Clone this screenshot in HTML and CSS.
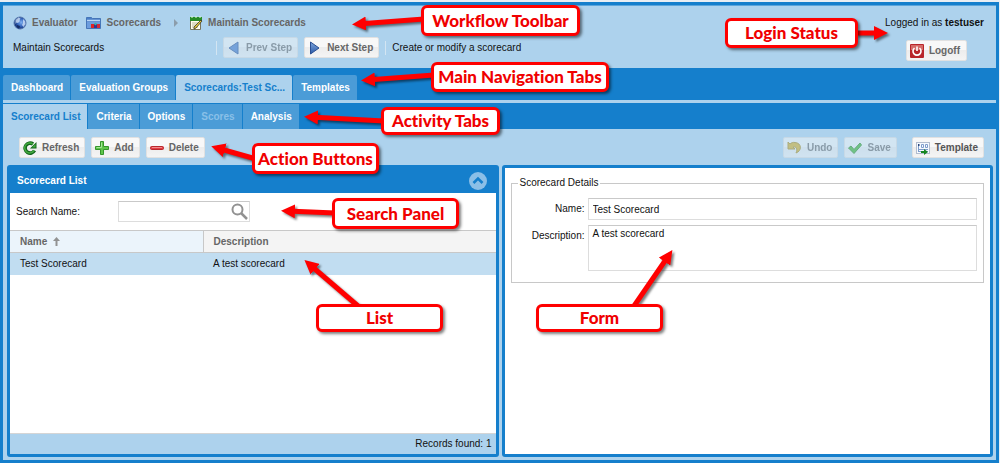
FILE: index.html
```html
<!DOCTYPE html>
<html lang="en">
<head>
<meta charset="utf-8">
<title>Maintain Scorecards</title>
<link rel="stylesheet" href="styles.css">
</head>
<body>
<div class="app">
  <header class="workflow">
    <div class="workflow-main">
      <nav class="crumbs" aria-label="Breadcrumb">
        <a class="crumb" href="#">
          <svg width="14" height="14" viewBox="0 0 14 14"><defs><radialGradient id="globe" cx=".6" cy=".45"><stop offset="0" stop-color="#7fb0f0"/><stop offset=".65" stop-color="#3464ba"/><stop offset="1" stop-color="#1a3b82"/></radialGradient></defs><circle cx="7" cy="7" r="6" fill="url(#globe)" stroke="#5577ad"/><path d="M2.500 4l3-2.500 2 1-1 1.500.5 1-2 2-1.500-.5-1 1.500zM10 3l2 2 .5 3-2 3-1.500-2 1-2z" fill="#dbe9fb" opacity=".75"/><path d="M4 9l3 1-1 3-2-2z" fill="#142d66"/></svg>
          Evaluator</a>
        <a class="crumb" href="#">
          <svg width="16" height="14" viewBox="0 0 16 14"><path d="M.5 1.500h5l1 1h8v10H.5z" fill="#4a7fc8" stroke="#4676b8"/><path d="M1 4.500h13" stroke="#b9d6f5" stroke-width="1.500"/><path d="M1 6h13v6H1z" fill="#6c9dde"/><path d="M5 8h3v4H5z" fill="#e02525"/><path d="M8 8h3v4H8z" fill="#35348f"/><path d="M11 8h3v4h-3z" fill="#d22b39"/><circle cx="9.500" cy="8" r="1.200" fill="#3fb3a4"/></svg>
          Scorecards</a>
        <svg class="crumb-arrow" width="6" height="8" viewBox="0 0 6 8"><path d="M1 0l4 4-4 4z" fill="#8c9dab"/></svg>
        <a class="crumb" href="#">
          <svg width="14" height="14" viewBox="0 0 14 14"><path d="M1.500 2h10v11.500h-10z" fill="#fffdee" stroke="#77755d"/><path d="M1 1h12v4H1z" fill="#268b28"/><path d="M2 1h2M6 1h2M10 1h2" stroke="#e5ffe0"/><path d="M3 7h6M3 9h5M3 11h6" stroke="#b9b99a"/><path d="M5 11L12 4l1 1-6 7-2 1z" fill="#e7c83c" stroke="#343424" stroke-width=".8"/></svg>
          Maintain Scorecards</a>
      </nav>
      <div class="steps">
        <span class="step-title">Maintain Scorecards</span>
        <span class="separator"></span>
        <button class="btn btn-step" type="button" disabled><svg width="14" height="14" viewBox="0 0 14 14"><path d="M11 1v12L2 7z" fill="#3f74c8" stroke="#234b91"/></svg>Prev Step</button>
        <button class="btn btn-step" type="button"><svg width="14" height="14" viewBox="0 0 14 14"><defs><linearGradient id="next" x2="0" y2="1"><stop stop-color="#7ea5dc"/><stop offset="1" stop-color="#2a5aa8"/></linearGradient></defs><path d="M2.500 1v12l8.500-6z" fill="url(#next)" stroke="#2a4f92"/></svg>Next Step</button>
        <span class="separator"></span>
        <span>Create or modify a scorecard</span>
      </div>
    </div>
    <div class="login">
      <span>Logged in as <b>testuser</b></span>
      <button class="btn btn-logoff" type="button"><svg width="14" height="14" viewBox="0 0 14 14"><rect width="14" height="14" rx="1" fill="#b8252a"/><path d="M1 1h12v5H1z" fill="#d46b67"/><path d="M4.500 4a4 4 0 1 0 5 0M7 2.500v4.500" fill="none" stroke="#fff" stroke-width="1.600"/></svg>Logoff</button>
    </div>
  </header>

  <nav class="tabs main-tabs" aria-label="Main">
    <button class="tab" type="button">Dashboard</button>
    <button class="tab" type="button">Evaluation Groups</button>
    <button class="tab active" type="button">Scorecards:Test Sc...</button>
    <button class="tab" type="button">Templates</button>
  </nav>
  <nav class="tabs activity-tabs" aria-label="Activity">
    <button class="tab active" type="button">Scorecard List</button>
    <button class="tab" type="button">Criteria</button>
    <button class="tab" type="button">Options</button>
    <button class="tab" type="button" disabled>Scores</button>
    <button class="tab" type="button">Analysis</button>
  </nav>

  <main class="workspace">
    <div class="actions">
      <button class="btn" type="button"><svg width="14" height="14" viewBox="0 0 14 14"><path d="M11.500 9.500A5 5 0 1 1 10 3" fill="none" stroke="#14651c" stroke-width="3.600"/><path d="M13.500 1v6.500H7z" fill="#14651c"/><path d="M11 9.500A5 5 0 1 1 10 3.200" fill="none" stroke="#43ab3e" stroke-width="1.500"/><path d="M12.500 3v3.500H9z" fill="#43ab3e"/></svg>Refresh</button>
      <button class="btn" type="button"><svg width="14" height="14" viewBox="0 0 14 14"><path d="M5.500.5h3v5h5v3h-5v5h-3v-5h-5v-3h5z" fill="#5fc64b" stroke="#35952c"/><path d="M6.500 1.500v5h-5" fill="none" stroke="#a5e796"/></svg>Add</button>
      <button class="btn" type="button"><svg width="14" height="14" viewBox="0 0 14 14"><rect x=".5" y="5.500" width="13" height="3" rx="1" fill="#e33b42" stroke="#b6282c"/><path d="M2 6.500h10" stroke="#f2898a"/></svg>Delete</button>
      <span class="spacer"></span>
      <button class="btn" type="button" disabled><svg width="15" height="14" viewBox="0 0 15 14"><path d="M1 1v7h7L6 6c3-1 5 2 3 6 6-2 6-10-1-10.500C6 1 4 2 3 3z" fill="#d8ad1c" stroke="#a78716"/></svg>Undo</button>
      <button class="btn" type="button" disabled><svg width="14" height="14" viewBox="0 0 14 14"><path d="M.5 7l2.500-2 3 3.500L12 2l1.500 2L6 12.500z" fill="#35b51f" stroke="#238817"/></svg>Save</button>
      <button class="btn btn-template" type="button"><svg width="14" height="14" viewBox="0 0 14 14"><rect x=".5" y="1.500" width="13" height="11" fill="#f6faff" stroke="#b3bdce"/><path d="M2.500 3v8M5.500 3.500h2v3h-2zM9.500 3.500h2v3h-2zM3 8.500h9M2 10.500h10" fill="none" stroke="#7f9dcb"/><path d="M2 3h1.500v2H2z" fill="#27457c"/><path d="M5 10h3V8l4 3-4 3v-2H5z" fill="#168620"/></svg>Template</button>
    </div>

    <div class="panels">
      <section class="panel">
        <div class="panel-head">
          <h2>Scorecard List</h2>
          <button class="collapse" type="button" aria-label="Collapse"><svg width="18" height="18" viewBox="0 0 18 18"><circle cx="9" cy="9" r="9" fill="#8bbfe7"/><path d="M4.500 11L9 6.500l4.500 4.500" fill="none" stroke="#157fcc" stroke-width="2.600"/></svg></button>
        </div>
        <div class="panel-body">
          <div class="search">
            <label for="search">Search Name:</label>
            <span class="search-box">
              <input id="search" type="text">
              <svg width="17" height="17" viewBox="0 0 17 17"><circle cx="6.500" cy="6.500" r="5" fill="none" stroke="#929292" stroke-width="2"/><path d="M10 10l6 6" stroke="#929292" stroke-width="2.500"/></svg>
            </span>
          </div>
          <table class="grid">
            <thead><tr><th class="sorted">Name <svg width="7" height="9" viewBox="0 0 7 9"><path d="M3.500 0L7 4H4.500v5h-2V4H0z" fill="#929292"/></svg></th><th>Description</th></tr></thead>
            <tbody><tr><td>Test Scorecard</td><td>A test scorecard</td></tr></tbody>
          </table>
          <div class="status">Records found: 1</div>
        </div>
      </section>

      <section class="panel">
        <form class="panel-body details">
          <fieldset>
            <legend>Scorecard Details</legend>
            <label for="name">Name:</label>
            <input id="name" type="text" value="Test Scorecard">
            <label for="description">Description:</label>
            <textarea id="description">A test scorecard</textarea>
          </fieldset>
        </form>
      </section>
    </div>
  </main>
</div>

<div class="notes">
  <svg class="arrows" width="1000" height="463" viewBox="0 0 1000 463">
    <defs><marker id="head" markerUnits="userSpaceOnUse" markerWidth="14" markerHeight="14" refX="8" refY="7" orient="auto"><path d="M0 0l14 7-14 7z" fill="#f00"/></marker></defs>
    <g fill="none" stroke="#f00" stroke-width="5">
      <path d="M424 19L358 24" marker-end="url(#head)"/>
      <path d="M434 75L367 80" marker-end="url(#head)"/>
      <path d="M384 121L310 117" marker-end="url(#head)"/>
      <path d="M256 159L217 148" marker-end="url(#head)"/>
      <path d="M335 213L287 211" marker-end="url(#head)"/>
      <path d="M358 306L309 264" marker-end="url(#head)"/>
      <path d="M634 306L669 255" marker-end="url(#head)"/>
      <path d="M856 33H882" marker-end="url(#head)"/>
    </g>
  </svg>
  <span class="note note-workflow">Workflow Toolbar</span>
  <span class="note note-login">Login Status</span>
  <span class="note note-main">Main Navigation Tabs</span>
  <span class="note note-activity">Activity Tabs</span>
  <span class="note note-actions">Action Buttons</span>
  <span class="note note-search">Search Panel</span>
  <span class="note note-list">List</span>
  <span class="note note-form">Form</span>
</div>
</body>
</html>
```
FILE: styles.css
```css
* { box-sizing: border-box; }

body {
  margin: 0;
  background: #e9eef3;
  color: #111;
  font: 10px/14px "Liberation Sans", Arial, sans-serif;
}

button, input, textarea { font: inherit; color: inherit; margin: 0; }
svg { display: block; flex: none; }

.app {
  display: flex;
  flex-direction: column;
  min-height: calc(100vh - 2px);
  margin: 2px 1px 0 0;
  padding: 3px;
  background: #157fcc;
}

/* Workflow toolbar */
.workflow {
  display: flex;
  justify-content: space-between;
  padding: 10px 12px 7px 10px;
  border-top: 1px solid #5aa5dc;
  background: #add2ed;
}
.workflow-main { display: flex; flex-direction: column; gap: 7px; }
.crumbs { display: flex; align-items: center; height: 14px; }
.crumb {
  display: flex;
  align-items: center;
  gap: 5px;
  margin-right: 8px;
  color: #666;
  font-weight: bold;
  text-decoration: none;
}
.crumb-arrow { margin: 0 10px 0 4px; }
.steps { display: flex; align-items: center; gap: 6px; }
.step-title { width: 197px; }
.separator { width: 1px; height: 14px; background: #d3e5f2; }
.login { display: flex; flex-direction: column; align-items: flex-end; gap: 10px; }

.btn {
  display: flex;
  align-items: center;
  gap: 5px;
  height: 21px;
  padding: 0 5px 0 3px;
  border: 1px solid #e1e1e1;
  border-radius: 2px;
  background: linear-gradient(#f8f8f8 50%, #ededed 50%, #f4f4f4);
  color: #666;
  font-weight: bold;
  white-space: nowrap;
}
.btn:disabled { opacity: .5; }
.btn-logoff { margin-right: 17px; padding-right: 6px; }

/* Tab bars */
.tabs { display: flex; gap: 1px; }
.tab {
  height: 25px;
  padding: 0 7px 0 8px;
  border: 0;
  border-radius: 2px 2px 0 0;
  background: #4b9cd7;
  color: #fff;
  font-weight: bold;
}
.tab.active { background: #add2ed; color: #157fcc; }
.tab:disabled { color: #89c0e8; }
.main-tabs { padding-top: 7px; border-bottom: 3px solid #add2ed; }
.activity-tabs { padding-top: 1px; }
.activity-tabs .tab { border-radius: 0; }

/* Workspace */
.workspace {
  display: flex;
  flex: 1;
  flex-direction: column;
  padding: 8px 3px 3px 4px;
  background: #add2ed;
}
.actions { display: flex; gap: 6px; padding: 0 9px 7px 12px; }
.spacer { flex: 1; }
.btn-template { margin-left: 9px; color: #555; }
.panels { display: flex; flex: 1; gap: 3px; }
.panel {
  display: flex;
  flex: 1;
  flex-direction: column;
  padding: 3px;
  border-radius: 3px;
  background: #157fcc;
}
.panel-head { display: flex; align-items: center; justify-content: space-between; height: 25px; padding: 0 9px 0 7px; }
.panel-head h2 { margin: 0; color: #fff; font-size: 10px; }
.collapse { padding: 0; border: 0; background: none; }
.panel-body { display: flex; flex: 1; flex-direction: column; background: #fff; }

.search { display: flex; align-items: center; height: 37px; padding: 0 6px; }
.search label { width: 102px; }
.search-box { position: relative; }
.search-box input { display: block; width: 132px; height: 21px; padding: 0 22px 0 4px; }
.search-box svg { position: absolute; top: 2px; right: 2px; }

input, textarea {
  border: 1px solid #ddd;
  border-top-color: #c9c9c9;
  border-radius: 0;
  background: #fff;
  outline: 0;
}

.grid { width: 100%; border-collapse: collapse; table-layout: fixed; }
.grid th, .grid td { height: 22px; padding: 0 10px; text-align: left; }
.grid th { border: solid #c8c8c8; border-width: 1px 0; background: #f4f4f4; color: #666; }
.grid th.sorted { width: 193px; border-right-width: 1px; background: #ebf4fb; }
.grid th svg { display: inline-block; margin-left: 3px; vertical-align: -1px; }
.grid td { background: #c1ddf1; }
.status { margin-top: auto; padding: 3px 4px; border-top: 1px solid #d5d5d5; background: #add2ed; text-align: right; }

.details { padding: 8px 6px; }
.details fieldset {
  display: grid;
  grid-template-columns: 73px 1fr;
  gap: 5px 3px;
  margin: 0;
  padding: 8px 6px 11px 0;
  border: 1px solid #c8c8c8;
}
.details legend { margin-left: 6px; padding: 0 2px; }
.details label { padding-top: 4px; text-align: right; }
.details input { min-width: 0; height: 22px; padding: 0 4px; }
.details textarea { height: 46px; padding: 1px 4px; resize: none; }

/* Callouts laid over the interface */
.notes { position: absolute; top: 0; left: 0; pointer-events: none; }
.arrows { filter: drop-shadow(2px 2px 1px rgba(0, 0, 0, .5)); }
.note {
  position: absolute;
  display: flex;
  align-items: center;
  justify-content: center;
  width: 127px;
  height: 28px;
  border: 3px solid #f00;
  border-radius: 6px;
  background: #fff;
  box-shadow: 2px 2px 3px rgba(0, 0, 0, .5);
  color: #f00000;
  font: 900 17px/22px Lato, sans-serif;
  font-variant-ligatures: none;
  white-space: nowrap;
}
.note-workflow { left: 421px; top: 5px; width: 159px; height: 31px; }
.note-login { left: 725px; top: 18px; width: 133px; height: 30px; }
.note-main { left: 431px; top: 62px; width: 178px; height: 30px; }
.note-activity { left: 381px; top: 107px; width: 119px; }
.note-actions { left: 252px; top: 143px; height: 31px; }
.note-search { left: 332px; top: 198px; height: 31px; }
.note-list { left: 316px; top: 304px; }
.note-form { left: 536px; top: 304px; }
```
